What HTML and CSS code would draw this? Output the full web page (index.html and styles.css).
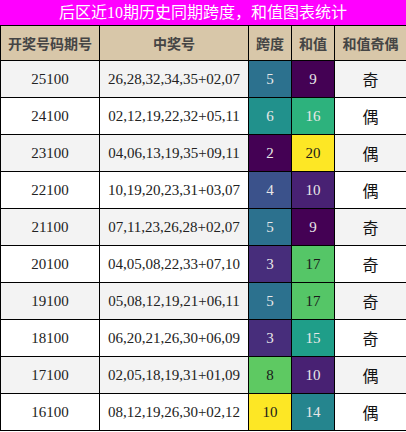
FILE: index.html
```html
<!DOCTYPE html>
<html lang="zh">
<head>
<meta charset="utf-8">
<link rel="stylesheet" href="styles.css">
</head>
<body>
<div class="title">后区近10期历史同期跨度，和值图表统计</div>
<table class="stats">
  <colgroup>
    <col class="c-issue"><col class="c-nums"><col class="c-span"><col class="c-sum"><col class="c-parity">
  </colgroup>
  <thead>
    <tr><th>开奖号码期号</th><th>中奖号</th><th>跨度</th><th>和值</th><th>和值奇偶</th></tr>
  </thead>
  <tbody>
    <tr><td>25100</td><td>26,28,32,34,35+02,07</td><td class="v v5">5</td><td class="v s9">9</td><td class="p">奇</td></tr>
    <tr><td>24100</td><td>02,12,19,22,32+05,11</td><td class="v v6">6</td><td class="v s16">16</td><td class="p">偶</td></tr>
    <tr><td>23100</td><td>04,06,13,19,35+09,11</td><td class="v v2">2</td><td class="v s20">20</td><td class="p">偶</td></tr>
    <tr><td>22100</td><td>10,19,20,23,31+03,07</td><td class="v v4">4</td><td class="v s10">10</td><td class="p">偶</td></tr>
    <tr><td>21100</td><td>07,11,23,26,28+02,07</td><td class="v v5">5</td><td class="v s9">9</td><td class="p">奇</td></tr>
    <tr><td>20100</td><td>04,05,08,22,33+07,10</td><td class="v v3">3</td><td class="v s17">17</td><td class="p">奇</td></tr>
    <tr><td>19100</td><td>05,08,12,19,21+06,11</td><td class="v v5">5</td><td class="v s17">17</td><td class="p">奇</td></tr>
    <tr><td>18100</td><td>06,20,21,26,30+06,09</td><td class="v v3">3</td><td class="v s15">15</td><td class="p">奇</td></tr>
    <tr><td>17100</td><td>02,05,18,19,31+01,09</td><td class="v v8">8</td><td class="v s10">10</td><td class="p">偶</td></tr>
    <tr><td>16100</td><td>08,12,19,26,30+02,12</td><td class="v v10">10</td><td class="v s14">14</td><td class="p">偶</td></tr>
  </tbody>
</table>
</body>
</html>
```
FILE: styles.css
```css
html, body {
  margin: 0;
  padding: 0;
  background: #ffffff;
}
.title {
  height: 25px;
  line-height: 25px;
  background: #ff00ff;
  color: #ffffff;
  text-align: center;
  font-family: "Liberation Serif", "Noto Sans CJK SC", serif;
  font-size: 16px;
  width: 406px;
}
.stats {
  border-collapse: collapse;
  table-layout: fixed;
  width: 406px;
}
.c-issue { width: 99px; }
.c-nums { width: 149px; }
.c-span { width: 43px; }
.c-sum { width: 43px; }
.c-parity { width: 72px; }
.stats th, .stats td {
  border: 1px solid #000;
  padding: 0;
  text-align: center;
  vertical-align: middle;
}
.stats th {
  height: 34px;
  background: #d8c7a9;
  color: #454545;
  font-family: "Noto Sans CJK SC", sans-serif;
  font-weight: bold;
  font-size: 14px;
}
.stats td {
  height: 36px;
  font-family: "Liberation Serif", serif;
  font-size: 15px;
  color: #222;
}
.stats tbody tr:nth-child(odd) td { background: #f3f3f3; }
.stats tbody tr:nth-child(even) td { background: #ffffff; }
.stats td.p {
  font-family: "Noto Sans CJK SC", sans-serif;
  font-size: 16px;
  color: #111;
}
.stats tbody tr td.v { color: #e8e8e8; }
.stats tbody tr td.v2, .stats tbody tr td.s9 { background: #440154; }
.stats tbody tr td.v3 { background: #472d7b; }
.stats tbody tr td.v4 { background: #3b528b; }
.stats tbody tr td.v5 { background: #2c718e; }
.stats tbody tr td.v6 { background: #21918c; }
.stats tbody tr td.v8 { background: #5ec962; color: #1a1a1a; }
.stats tbody tr td.v10, .stats tbody tr td.s20 { background: #fde725; color: #1a1a1a; }
.stats tbody tr td.s10 { background: #482173; }
.stats tbody tr td.s14 { background: #25858e; }
.stats tbody tr td.s15 { background: #1f9e89; }
.stats tbody tr td.s16 { background: #2db27d; }
.stats tbody tr td.s17 { background: #55c667; color: #1a1a1a; }
```
